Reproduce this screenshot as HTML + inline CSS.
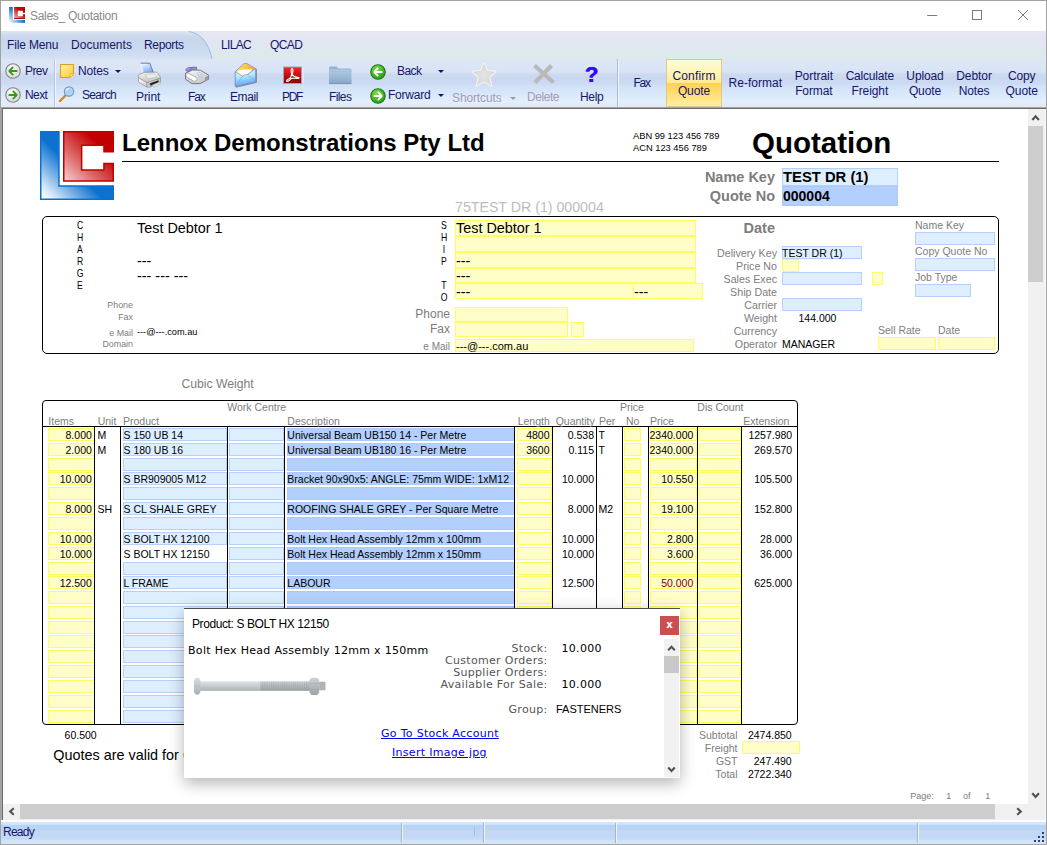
<!DOCTYPE html><html><head><meta charset="utf-8"><title>Sales_ Quotation</title><style>
*{box-sizing:border-box;margin:0;padding:0}
html,body{width:1047px;height:845px;overflow:hidden;background:#fff}
body{font-family:"Liberation Sans",sans-serif;font-size:11px;color:#000;position:relative}
.a{position:absolute;white-space:nowrap}
.ui{font-family:"Liberation Sans",sans-serif;font-size:12px;color:#15156a}
.y{position:absolute;background:#fffdc8;border:1px solid #fffd5f}
.lb{position:absolute;background:#ddefff;border:1px solid #b5d0fc}
.mb{position:absolute;background:#b2cffe;border:1px solid #acc9fb}
.vl{position:absolute;background:#000;width:1px}
.hl{position:absolute;background:#000;height:1px}
.g{color:#7d7d7d}
.t11{font-size:10.5px;line-height:13px}
.r{text-align:right}
.vd{font-family:"DejaVu Sans","Liberation Sans",sans-serif}
</style></head><body>
<div class="a" style="left:0;top:0;width:1047px;height:845px;background:#fff;border:1px solid #a2a2a2"></div>
<svg class="a" style="left:9px;top:7px" width="16" height="16" viewBox="0 0 16 16">
<defs><linearGradient id="mb" gradientUnits="userSpaceOnUse" x1="0" y1="16" x2="9" y2="7"><stop offset="0.05" stop-color="#ffffff"/><stop offset="1" stop-color="#0a6ccc"/></linearGradient>
<linearGradient id="mr" gradientUnits="userSpaceOnUse" x1="5" y1="12" x2="13" y2="4"><stop offset="0" stop-color="#f3c4c4"/><stop offset="0.9" stop-color="#c00000"/></linearGradient></defs>
<path d="M0 0H3.7V13H16V16H0Z" fill="url(#mb)"/>
<path d="M5 0H16V5.7H13.9V3.8H8.8V9.2H13.9V7.2H16V12H5Z" fill="url(#mr)"/>
<path d="M5 11H16V12H5Z" fill="#c00000"/></svg>
<div class="a " style="left:30px;top:8px;font-size:12px;color:#8a8a8a;line-height:16px;letter-spacing:-0.3px">Sales_ Quotation</div>
<svg class="a" style="left:915px;top:0" width="132" height="31" viewBox="0 0 132 31">
<path d="M12.2 15.5H22.2" stroke="#7a7a7a" stroke-width="1" fill="none"/>
<rect x="57.5" y="10.5" width="9" height="9" stroke="#7a7a7a" stroke-width="1" fill="none"/>
<path d="M103 10L113 20M113 10L103 20" stroke="#7a7a7a" stroke-width="1" fill="none"/></svg>
<div class="a" style="left:1px;top:31px;width:1045px;height:28px;background:linear-gradient(#e6e7f3 0%,#e2e6f2 45%,#dde8ee 75%,#dcebe8 100%)"></div>
<svg class="a" style="left:1px;top:31px" width="215" height="28" viewBox="0 0 215 28">
<defs><linearGradient id="tg" x1="0" y1="0" x2="0" y2="1"><stop offset="0" stop-color="#dee7f1"/><stop offset="0.1" stop-color="#d2deee"/><stop offset="0.28" stop-color="#c7d6eb"/><stop offset="0.65" stop-color="#cad9ee"/><stop offset="1" stop-color="#d5e1f4"/></linearGradient></defs>
<path d="M0 0H188C202 3 208 14 211 28H0Z" fill="url(#tg)"/>
<path d="M188 0.5C202 3 208 14 211 28" stroke="#9db9e6" stroke-width="1" fill="none"/></svg>
<div class="a ui" style="left:7px;top:37px;line-height:16px;letter-spacing:-0.15px;">File Menu</div>
<div class="a ui" style="left:71px;top:37px;line-height:16px;letter-spacing:0.03px;">Documents</div>
<div class="a ui" style="left:144px;top:37px;line-height:16px;letter-spacing:-0.33px;">Reports</div>
<div class="a ui" style="left:221px;top:37px;line-height:16px;letter-spacing:-0.67px;">LILAC</div>
<div class="a ui" style="left:270px;top:37px;line-height:16px;letter-spacing:-0.59px;">QCAD</div>
<div class="a" style="left:1px;top:59px;width:1045px;height:48px;background:linear-gradient(#dde5f5 0%,#dae5f6 15%,#d8e3f5 27%,#cfd9f0 31%,#c8d9ef 40%,#ccd9f2 50%,#d2e1f6 57%,#d8e8fa 72%,#e4effc 90%,#e0e8f5 100%)"></div>
<div class="a" style="left:1px;top:107px;width:1045px;height:1px;background:#a6a6a6"></div>
<div class="a" style="left:1px;top:108px;width:1045px;height:1px;background:#6b6b6b"></div>
<div class="a" style="left:1px;top:108px;width:2px;height:713px;background:#a6a6a6"></div>
<div class="a" style="left:2px;top:108px;width:1px;height:713px;background:#6b6b6b"></div>
<div class="a" style="left:54px;top:59px;width:1px;height:48px;background:#b6c4de"></div>
<div class="a" style="left:55px;top:59px;width:1px;height:48px;background:#f2f6fc"></div>
<div class="a" style="left:617px;top:59px;width:1px;height:48px;background:#a9b9d6"></div>
<div class="a" style="left:618px;top:59px;width:1px;height:48px;background:#f2f6fc"></div>
<svg class="a" style="left:5px;top:63px" width="16" height="16" viewBox="0 0 15 15"><defs><radialGradient id="sg" cx="0.4" cy="0.3" r="0.8"><stop offset="0" stop-color="#fbfbfb"/><stop offset="1" stop-color="#cfd3d8"/></radialGradient><radialGradient id="gg" cx="0.4" cy="0.3" r="0.8"><stop offset="0" stop-color="#7fdc4a"/><stop offset="1" stop-color="#1f9410"/></radialGradient></defs><circle cx="7.5" cy="7.5" r="6.8" fill="url(#sg)" stroke="#838383" stroke-width="1"/><path d="M11 7.5H4.2M7.2 4.2L4 7.5L7.2 10.8" stroke="#3b9a14" stroke-width="1.7" fill="none" stroke-linecap="round" stroke-linejoin="round"/></svg>
<svg class="a" style="left:5px;top:87px" width="16" height="16" viewBox="0 0 15 15"><defs><radialGradient id="sg" cx="0.4" cy="0.3" r="0.8"><stop offset="0" stop-color="#fbfbfb"/><stop offset="1" stop-color="#cfd3d8"/></radialGradient><radialGradient id="gg" cx="0.4" cy="0.3" r="0.8"><stop offset="0" stop-color="#7fdc4a"/><stop offset="1" stop-color="#1f9410"/></radialGradient></defs><circle cx="7.5" cy="7.5" r="6.8" fill="url(#sg)" stroke="#838383" stroke-width="1"/><path d="M4 7.5H10.8M7.8 4.2L11 7.5L7.8 10.8" stroke="#3b9a14" stroke-width="1.7" fill="none" stroke-linecap="round" stroke-linejoin="round"/></svg>
<div class="a ui" style="left:25px;top:63px;line-height:16px;letter-spacing:-0.59px;">Prev</div>
<div class="a ui" style="left:25px;top:87px;line-height:16px;letter-spacing:-0.59px;">Next</div>
<svg class="a" style="left:59px;top:63px" width="16" height="16" viewBox="0 0 16 16"><defs><linearGradient id="ng" x1="0" y1="0" x2="1" y2="1"><stop offset="0" stop-color="#fff3a4"/><stop offset="1" stop-color="#fbc93c"/></linearGradient></defs><path d="M1.5 1.5H14.5V11L11 14.5H1.5Z" fill="url(#ng)" stroke="#dea21c" stroke-width="1.1"/><path d="M14.5 11H11V14.5" fill="#fff3b0" stroke="#d9a318" stroke-width="0.8"/></svg>
<div class="a ui" style="left:78px;top:63px;line-height:16px;letter-spacing:-0.13px;">Notes</div>
<div class="a" style="left:115px;top:70px;border-left:3px solid transparent;border-right:3px solid transparent;border-top:3px solid #15156a"></div>
<svg class="a" style="left:58px;top:85px" width="18" height="18" viewBox="0 0 18 18"><path d="M2 16L8 10" stroke="#d8862a" stroke-width="2.4" stroke-linecap="round"/><circle cx="11" cy="6.5" r="4.6" fill="#bfe0fb" stroke="#7f96b8" stroke-width="1.3"/><circle cx="11" cy="6.5" r="3.2" fill="#a6d3f8"/><path d="M8.5 5.5A3 3 0 0 1 11 3.5" stroke="#fff" stroke-width="1" fill="none"/></svg>
<div class="a ui" style="left:82px;top:87px;line-height:16px;letter-spacing:-0.67px;">Search</div>
<svg class="a" style="left:136px;top:61px" width="27" height="28" viewBox="136 61 27 28">
<defs><linearGradient id="pg1" x1="0" y1="0" x2="0" y2="1"><stop offset="0" stop-color="#f6f6f6"/><stop offset="1" stop-color="#c2c2c2"/></linearGradient>
<linearGradient id="pg2" x1="0" y1="0" x2="0.5" y2="1"><stop offset="0" stop-color="#ffffff"/><stop offset="1" stop-color="#74b2f4"/></linearGradient>
<linearGradient id="pg3" x1="0" y1="0" x2="1" y2="0"><stop offset="0" stop-color="#fafafa"/><stop offset="1" stop-color="#d4d4d4"/></linearGradient></defs>
<path d="M140.2 63.2H149.8L153.4 72.8H143.4Z" fill="url(#pg2)"/>
<path d="M140.2 63.2H149.8L153.4 72.8" fill="none" stroke="#6868a6" stroke-width="0.9"/>
<path d="M140.2 63.2L143.4 72.8" fill="none" stroke="#f4f6ff" stroke-width="0.8"/>
<path d="M138.2 76.4Q138 75 139.6 74.4L144.5 72.4L155.8 72.2Q157.2 72.2 157.8 73.2L160.2 77Q160.6 78 159.4 78.6L148 82.6Q147 82.9 146 82.4L138.8 78Z" fill="url(#pg1)" stroke="#8c8c8c" stroke-width="0.7"/>
<path d="M145 74.2L154.6 73.8L157 77.2L147.4 78.8Z" fill="#ececec" stroke="#a8a8a8" stroke-width="0.5"/>
<path d="M138.4 77.6L147 82.6V87L139 82.4Q138.4 82 138.4 81Z" fill="url(#pg3)" stroke="#909090" stroke-width="0.7"/>
<path d="M147 82.6L160.4 78V82L150 87.2L147 87Z" fill="#cfcfcf" stroke="#8a8a8a" stroke-width="0.7"/>
<path d="M149.6 83.4L158.4 80.2L158.8 82L150.8 85.6Z" fill="#1e1e1e"/>
<path d="M152 85.4L159.4 82.2L161.2 83.4L154 87Z" fill="#e4e4e4" stroke="#9a9a9a" stroke-width="0.4"/>
<path d="M149.6 84.6L151.6 86" stroke="#4a58c8" stroke-width="0.8"/>
<rect x="156.6" y="78.8" width="2.2" height="1" fill="#5cc040" transform="rotate(-18 157.7 79.3)"/>
</svg>
<div class="a ui" style="left:136px;top:89px;line-height:16px;letter-spacing:-0.07px;">Print</div>
<svg class="a" style="left:184px;top:65px" width="26" height="21" viewBox="184 65 26 21">
<defs><linearGradient id="fg1" x1="0" y1="0" x2="0.6" y2="1"><stop offset="0" stop-color="#f8f8f8"/><stop offset="1" stop-color="#c9c9c9"/></linearGradient>
<linearGradient id="fg2" x1="0" y1="0" x2="1" y2="0.4"><stop offset="0" stop-color="#d6d6ff"/><stop offset="0.5" stop-color="#7c7cf0"/><stop offset="1" stop-color="#a9a9dc"/></linearGradient></defs>
<path d="M185.6 70.2Q186 68.4 188.6 67.6L196.4 67.1L196.9 69L191.5 71.6Q187.5 72.6 185.6 70.2Z" fill="url(#fg2)" stroke="#5c5c74" stroke-width="0.7"/>
<path d="M185.5 73.2L192.5 70L200.5 70.2L208.6 75.2V79.2L200 83.6H192L185.5 79.2Z" fill="url(#fg1)" stroke="#6c6c6c" stroke-width="0.9" stroke-linejoin="round"/>
<path d="M208.6 75.2V79.2L205 81.2V77.6Z" fill="#9a9a9a"/>
<path d="M186 74.4Q185.8 72.8 187.6 72.9L196.3 77.5Q197.6 78.5 196.9 80L195.9 81Q194.7 81.7 193.5 80.9L186.2 76.7Z" fill="#fcfcfc" stroke="#8a8a8a" stroke-width="0.6"/>
<path d="M186.2 77L193.3 81.3" stroke="#b4a8b8" stroke-width="0.6"/>
<g fill="#9cc6ec"><circle cx="197.6" cy="73" r="0.7"/><circle cx="199.8" cy="72.4" r="0.7"/><circle cx="201.8" cy="73.6" r="0.7"/><circle cx="198.6" cy="75" r="0.7"/><circle cx="200.8" cy="74.8" r="0.7"/><circle cx="203" cy="75.6" r="0.7"/><circle cx="199.6" cy="77" r="0.7"/><circle cx="201.8" cy="77.2" r="0.7"/></g>
</svg>
<div class="a ui" style="left:188px;top:89px;line-height:16px;letter-spacing:-1.17px;">Fax</div>
<svg class="a" style="left:233px;top:61px" width="25" height="27" viewBox="233 61 25 27">
<defs><linearGradient id="eg1" x1="0" y1="0" x2="0.2" y2="1"><stop offset="0" stop-color="#e2ffff"/><stop offset="0.45" stop-color="#b4ecfc"/><stop offset="1" stop-color="#5aa8f6"/></linearGradient>
<linearGradient id="eg2" x1="0" y1="0" x2="1" y2="0.5"><stop offset="0" stop-color="#fff56a"/><stop offset="0.5" stop-color="#ffc24a"/><stop offset="1" stop-color="#ff9a34"/></linearGradient></defs>
<path d="M256.4 69.2V82.4L236 87.2" fill="none" stroke="#5a5a5a" stroke-width="0.9" opacity="0.7"/>
<path d="M235.3 71.6L243.8 63.8Q245.2 62.8 246.8 63.6L255.6 68.6V81.9L235.3 86.5Z" fill="url(#eg2)" stroke="#7078c6" stroke-width="0.65" stroke-linejoin="round"/>
<path d="M238.4 70.6Q245 69 252.4 69.4Q251 72.6 247.2 74.4Q244.2 74.4 242.4 76.2Q239.6 74.4 237.4 72.4Z" fill="#fffdf2"/>
<path d="M235.3 71.6L242.6 76.2Q244.6 74.4 247.4 74.6L255.6 68.6V81.9L235.3 86.5Z" fill="url(#eg1)" stroke="#7078c6" stroke-width="0.6" stroke-linejoin="round"/>
<path d="M235.6 86.2L242.6 76.2M255.4 81.4L247.8 74.6" stroke="#8a94d4" stroke-width="0.6" fill="none"/>
</svg>
<div class="a ui" style="left:230px;top:89px;line-height:16px;letter-spacing:-0.38px;">Email</div>
<svg class="a" style="left:283px;top:66px" width="21" height="19" viewBox="0 0 21 19">
<defs><linearGradient id="pdg" x1="0" y1="0" x2="0" y2="1"><stop offset="0" stop-color="#ee2a2a"/><stop offset="0.55" stop-color="#c40a0a"/><stop offset="1" stop-color="#860000"/></linearGradient></defs>
<rect x="0.5" y="1" width="18" height="16.5" fill="url(#pdg)" stroke="#93a6cc" stroke-width="1"/>
<rect x="19.6" y="3" width="0.9" height="14" fill="#f1f4fa"/>
<path d="M9 2.5C10.5 2.5 10 6 9.2 8.5C10.3 10.5 12.5 11.3 15.2 11.2C16.5 11.4 16.2 12.6 15 12.4C12.8 12.2 10.2 12 8.2 12.4C6.8 14.2 5 16 3.8 15.4C3 14.6 5 13 7.2 12C8 10.8 8.4 9.6 8.6 8.2C8 6 7.8 2.6 9 2.5Z" fill="none" stroke="#fff" stroke-width="1.1" stroke-linejoin="round"/>
</svg>
<div class="a ui" style="left:282px;top:89px;line-height:16px;letter-spacing:-1.33px;">PDF</div>
<svg class="a" style="left:328px;top:65px" width="25" height="20" viewBox="0 0 25 20">
<defs><linearGradient id="flg" x1="0" y1="0" x2="0" y2="1"><stop offset="0" stop-color="#8eaecf"/><stop offset="0.35" stop-color="#a9c5de"/><stop offset="1" stop-color="#84a6c8"/></linearGradient></defs>
<path d="M1 3Q1 1.5 2.5 1.5H8.5L10.5 3.5H22Q23.5 3.5 23.5 5V17.5Q23.5 19 22 19H2.5Q1 19 1 17.5Z" fill="url(#flg)"/>
<path d="M1 5.2H23.5" stroke="#b9d0e6" stroke-width="0.8"/>
<path d="M1 18.6H23.5" stroke="#6f92b6" stroke-width="0.8"/>
</svg>
<div class="a ui" style="left:329px;top:89px;line-height:16px;letter-spacing:-0.61px;">Files</div>
<svg class="a" style="left:369.5px;top:63.5px" width="16" height="16" viewBox="0 0 15 15"><defs><radialGradient id="sg" cx="0.4" cy="0.3" r="0.8"><stop offset="0" stop-color="#fbfbfb"/><stop offset="1" stop-color="#cfd3d8"/></radialGradient><radialGradient id="gg" cx="0.4" cy="0.3" r="0.8"><stop offset="0" stop-color="#7fdc4a"/><stop offset="1" stop-color="#1f9410"/></radialGradient></defs><circle cx="7.5" cy="7.5" r="6.8" fill="url(#gg)" stroke="#1c7a12" stroke-width="1"/><path d="M11 7.5H4.2M7.2 4.2L4 7.5L7.2 10.8" stroke="#fff" stroke-width="1.7" fill="none" stroke-linecap="round" stroke-linejoin="round"/></svg>
<svg class="a" style="left:369.5px;top:87.5px" width="16" height="16" viewBox="0 0 15 15"><defs><radialGradient id="sg" cx="0.4" cy="0.3" r="0.8"><stop offset="0" stop-color="#fbfbfb"/><stop offset="1" stop-color="#cfd3d8"/></radialGradient><radialGradient id="gg" cx="0.4" cy="0.3" r="0.8"><stop offset="0" stop-color="#7fdc4a"/><stop offset="1" stop-color="#1f9410"/></radialGradient></defs><circle cx="7.5" cy="7.5" r="6.8" fill="url(#gg)" stroke="#1c7a12" stroke-width="1"/><path d="M4 7.5H10.8M7.8 4.2L11 7.5L7.8 10.8" stroke="#fff" stroke-width="1.7" fill="none" stroke-linecap="round" stroke-linejoin="round"/></svg>
<div class="a ui" style="left:397px;top:63px;line-height:16px;letter-spacing:-0.59px;">Back</div>
<div class="a ui" style="left:388px;top:87px;line-height:16px;letter-spacing:-0.24px;">Forward</div>
<div class="a" style="left:438px;top:70px;border-left:3px solid transparent;border-right:3px solid transparent;border-top:3px solid #15156a"></div>
<div class="a" style="left:438px;top:94px;border-left:3px solid transparent;border-right:3px solid transparent;border-top:3px solid #15156a"></div>
<svg class="a" style="left:470px;top:61px" width="28" height="28" viewBox="470 61 28 28">
<defs><radialGradient id="stg" cx="0.5" cy="0.5" r="0.6"><stop offset="0" stop-color="#e6e6e6"/><stop offset="1" stop-color="#d2d2d2"/></radialGradient></defs>
<path d="M484 63.6L487.3 71.2L495.3 71.6L489.2 77.1L491.2 85.6L484 81.1L476.8 85.6L478.8 77.1L472.7 71.6L480.7 71.2Z" fill="url(#stg)" stroke="#f3f3f3" stroke-width="2.2" stroke-linejoin="round"/>
<path d="M484 64.4L487 71.6L494.4 72L488.7 77L490.6 84.8L484 80.6L477.4 84.8L479.3 77L473.6 72L481 71.6Z" fill="url(#stg)" stroke="#d9d9d9" stroke-width="0.8" stroke-linejoin="round"/>
</svg>
<div class="a ui" style="left:452px;top:90px;line-height:16px;letter-spacing:-0.12px;color:#a79ab4">Shortcuts</div>
<div class="a" style="left:510px;top:97px;border-left:3px solid transparent;border-right:3px solid transparent;border-top:3px solid #9a9aa8"></div>
<svg class="a" style="left:532px;top:63px" width="24" height="22" viewBox="0 0 24 22"><path d="M2.5 2.5L21.5 19.5M19.5 2.5L3 19.5" stroke="#b9b9b9" stroke-width="4.2" stroke-linecap="butt"/></svg>
<div class="a ui" style="left:527px;top:89px;line-height:16px;letter-spacing:-0.43px;color:#a79ab4">Delete</div>
<div class="a " style="left:585px;top:62px;font-size:22px;font-weight:bold;color:#2212f0;line-height:26px;text-shadow:0.6px 0 0 #e020e0,-0.4px 0 0 #2a2aff">?</div>
<div class="a ui" style="left:580px;top:89px;line-height:16px;letter-spacing:-0.32px;">Help</div>
<div class="a" style="left:666px;top:59px;width:56px;height:48px;border:1px solid #dcc88c;background:linear-gradient(#fffbd8 0%,#fff3b4 30%,#ffea96 49%,#ffd24f 50%,#ffdc6e 70%,#ffefa2 100%)"></div>
<div class="a ui" style="left:581.7px;top:75px;width:120px;text-align:center;line-height:16px;letter-spacing:-1.17px;">Fax</div>
<div class="a ui" style="left:634px;top:69.3px;width:120px;text-align:center;line-height:14.7px"><span style="letter-spacing:0.16px;">Confirm</span><br><span style="letter-spacing:-0.10px;">Quote</span></div>
<div class="a ui" style="left:695.3px;top:75px;width:120px;text-align:center;line-height:16px;letter-spacing:0.01px;">Re-format</div>
<div class="a ui" style="left:753.8px;top:69.3px;width:120px;text-align:center;line-height:14.7px"><span style="letter-spacing:-0.05px;">Portrait</span><br><span style="letter-spacing:-0.12px;">Format</span></div>
<div class="a ui" style="left:809.8px;top:69.3px;width:120px;text-align:center;line-height:14.7px"><span style="letter-spacing:-0.19px;">Calculate</span><br><span style="letter-spacing:-0.09px;">Freight</span></div>
<div class="a ui" style="left:865px;top:69.3px;width:120px;text-align:center;line-height:14.7px"><span style="letter-spacing:-0.12px;">Upload</span><br><span style="letter-spacing:-0.10px;">Quote</span></div>
<div class="a ui" style="left:914px;top:69.3px;width:120px;text-align:center;line-height:14.7px"><span style="letter-spacing:-0.05px;">Debtor</span><br><span style="letter-spacing:-0.13px;">Notes</span></div>
<div class="a ui" style="left:961.7px;top:69.3px;width:120px;text-align:center;line-height:14.7px"><span style="letter-spacing:-0.18px;">Copy</span><br><span style="letter-spacing:-0.10px;">Quote</span></div>
<svg class="a" style="left:39px;top:130px" width="77" height="72" viewBox="39 130 77 72">
<defs><linearGradient id="lb" gradientUnits="userSpaceOnUse" x1="42" y1="198" x2="72" y2="168"><stop offset="0" stop-color="#ffffff"/><stop offset="0.2" stop-color="#dcebf9"/><stop offset="1" stop-color="#0c72d2"/></linearGradient>
<linearGradient id="lr" gradientUnits="userSpaceOnUse" x1="64" y1="181" x2="100" y2="145"><stop offset="0" stop-color="#f7d0d0"/><stop offset="0.5" stop-color="#dc6262"/><stop offset="1" stop-color="#c20000"/></linearGradient></defs>
<path d="M40.75 131.75H58.95V186.05H113.25V199.25H40.75Z" fill="url(#lb)" stroke="#0a70d0" stroke-width="1.5"/>
<path d="M63.75 131.75H113.25V151.75H103.95V145.15H81.65V170.05H103.95V163.45H113.25V181.05H63.75Z" fill="url(#lr)" stroke="#c00000" stroke-width="1.5"/>
</svg>
<div class="a " style="left:122px;top:129px;font-size:24px;font-weight:bold;line-height:28px">Lennox Demonstrations Pty Ltd</div>
<div class="hl" style="left:122px;top:161px;width:877px;height:1px;"></div>
<div class="a " style="left:633px;top:131px;font-size:9.3px;line-height:11px">ABN 99 123 456 789</div>
<div class="a " style="left:633px;top:143px;font-size:9.3px;line-height:11px">ACN 123 456 789</div>
<div class="a " style="left:752px;top:125px;font-size:29.5px;font-weight:bold;line-height:36px">Quotation</div>
<div class="a r g" style="right:272px;top:168px;font-size:14.5px;font-weight:bold;line-height:18px">Name Key</div>
<div class="a r g" style="right:272px;top:187px;font-size:14.5px;font-weight:bold;line-height:18px">Quote No</div>
<div class="lb" style="left:782px;top:168px;width:116px;height:18px;"></div>
<div class="mb" style="left:782px;top:186px;width:116px;height:20px;"></div>
<div class="a " style="left:783px;top:168px;font-size:14.8px;font-weight:bold;line-height:18px">TEST DR (1)</div>
<div class="a " style="left:783px;top:187px;font-size:14px;font-weight:bold;line-height:18px">000004</div>
<div class="a " style="left:455px;top:199px;font-size:14.2px;color:#bdbdbd;line-height:17px">75TEST DR (1) 000004</div>
<div class="a" style="left:42px;top:216px;width:957px;height:138px;border:1px solid #000;border-radius:5px"></div>
<div class="a" style="left:70px;top:220px;width:20px;text-align:center;font-size:9.6px;line-height:12px;transform:scale(0.9,1.04);transform-origin:50% 75%">C</div>
<div class="a" style="left:70px;top:232px;width:20px;text-align:center;font-size:9.6px;line-height:12px;transform:scale(0.9,1.04);transform-origin:50% 75%">H</div>
<div class="a" style="left:70px;top:244px;width:20px;text-align:center;font-size:9.6px;line-height:12px;transform:scale(0.9,1.04);transform-origin:50% 75%">A</div>
<div class="a" style="left:70px;top:256px;width:20px;text-align:center;font-size:9.6px;line-height:12px;transform:scale(0.9,1.04);transform-origin:50% 75%">R</div>
<div class="a" style="left:70px;top:268px;width:20px;text-align:center;font-size:9.6px;line-height:12px;transform:scale(0.9,1.04);transform-origin:50% 75%">G</div>
<div class="a" style="left:70px;top:280px;width:20px;text-align:center;font-size:9.6px;line-height:12px;transform:scale(0.9,1.04);transform-origin:50% 75%">E</div>
<div class="a " style="left:137px;top:219px;font-size:14.4px;line-height:18px">Test Debtor 1</div>
<div class="a " style="left:137px;top:252px;font-size:14.4px;line-height:18px">---</div>
<div class="a " style="left:137px;top:267.3px;font-size:14.4px;line-height:18px">--- --- ---</div>
<div class="a r g" style="right:914px;top:298.8px;font-size:8.9px;line-height:12px">Phone</div>
<div class="a r g" style="right:914px;top:310.5px;font-size:8.9px;line-height:12px">Fax</div>
<div class="a r g" style="right:914px;top:326.5px;font-size:8.9px;line-height:12px">e Mail</div>
<div class="a r g" style="right:914px;top:338px;font-size:8.9px;line-height:12px">Domain</div>
<div class="a " style="left:137px;top:326px;font-size:9.2px;line-height:12px">---@---.com.au</div>
<div class="a" style="left:434px;top:220px;width:20px;text-align:center;font-size:9.6px;line-height:12px;transform:scale(0.9,1.04);transform-origin:50% 75%">S</div>
<div class="a" style="left:434px;top:232px;width:20px;text-align:center;font-size:9.6px;line-height:12px;transform:scale(0.9,1.04);transform-origin:50% 75%">H</div>
<div class="a" style="left:434px;top:244px;width:20px;text-align:center;font-size:9.6px;line-height:12px;transform:scale(0.9,1.04);transform-origin:50% 75%">I</div>
<div class="a" style="left:434px;top:255.6px;width:20px;text-align:center;font-size:9.6px;line-height:12px;transform:scale(0.9,1.04);transform-origin:50% 75%">P</div>
<div class="a" style="left:434px;top:280px;width:20px;text-align:center;font-size:9.6px;line-height:12px;transform:scale(0.9,1.04);transform-origin:50% 75%">T</div>
<div class="a" style="left:434px;top:291.8px;width:20px;text-align:center;font-size:9.6px;line-height:12px;transform:scale(0.9,1.04);transform-origin:50% 75%">O</div>
<div class="y" style="left:455px;top:220px;width:241px;height:16px;"></div>
<div class="y" style="left:455px;top:236px;width:241px;height:16px;"></div>
<div class="y" style="left:455px;top:252px;width:241px;height:16px;"></div>
<div class="y" style="left:455px;top:267.5px;width:241px;height:15.5px;"></div>
<div class="y" style="left:455px;top:283px;width:178.5px;height:16px;"></div>
<div class="y" style="left:633px;top:283px;width:70px;height:16px;"></div>
<div class="y" style="left:455px;top:307px;width:113px;height:15px;"></div>
<div class="y" style="left:455px;top:322px;width:113px;height:15px;"></div>
<div class="y" style="left:571px;top:322px;width:13px;height:15px;"></div>
<div class="y" style="left:455px;top:339px;width:239px;height:13px;"></div>
<div class="a " style="left:456px;top:219px;font-size:14.4px;line-height:18px">Test Debtor 1</div>
<div class="a " style="left:456px;top:252px;font-size:14.4px;line-height:18px">---</div>
<div class="a " style="left:456px;top:267.3px;font-size:14.4px;line-height:18px">---</div>
<div class="a " style="left:456px;top:282.5px;font-size:14.4px;line-height:18px">---</div>
<div class="a " style="left:634px;top:282.5px;font-size:14.4px;line-height:18px">---</div>
<div class="a r g" style="right:597px;top:307px;font-size:12px;line-height:15px">Phone</div>
<div class="a r g" style="right:597px;top:322px;font-size:12px;line-height:15px">Fax</div>
<div class="a r g" style="right:597px;top:340.5px;font-size:10px;line-height:12px">e Mail</div>
<div class="a " style="left:456px;top:340px;font-size:11px;line-height:12px">---@---.com.au</div>
<div class="a r g" style="right:272px;top:219px;font-size:14.5px;font-weight:bold;line-height:18px">Date</div>
<div class="a r g" style="right:270px;top:246.8px;font-size:10.7px;line-height:13px">Delivery Key</div>
<div class="a r g" style="right:270px;top:259.8px;font-size:10.7px;line-height:13px">Price No</div>
<div class="a r g" style="right:270px;top:272.8px;font-size:10.7px;line-height:13px">Sales Exec</div>
<div class="a r g" style="right:270px;top:285.8px;font-size:10.7px;line-height:13px">Ship Date</div>
<div class="a r g" style="right:270px;top:298.8px;font-size:10.7px;line-height:13px">Carrier</div>
<div class="a r g" style="right:270px;top:311.8px;font-size:10.7px;line-height:13px">Weight</div>
<div class="a r g" style="right:270px;top:324.8px;font-size:10.7px;line-height:13px">Currency</div>
<div class="a r g" style="right:270px;top:337.8px;font-size:10.7px;line-height:13px">Operator</div>
<div class="lb" style="left:782px;top:246px;width:80px;height:12.5px;"></div>
<div class="y" style="left:782px;top:259px;width:16.5px;height:12.5px;"></div>
<div class="lb" style="left:782px;top:272px;width:80px;height:12.5px;"></div>
<div class="y" style="left:872px;top:272px;width:11px;height:12.5px;"></div>
<div class="lb" style="left:782px;top:298px;width:80px;height:12.5px;"></div>
<div class="a t11" style="left:782px;top:246.5px;">TEST DR (1)</div>
<div class="a t11" style="left:798.5px;top:311.8px;">144.000</div>
<div class="a t11" style="left:782px;top:337.5px;">MANAGER</div>
<div class="a g t11" style="left:915px;top:219px;">Name Key</div>
<div class="lb" style="left:915px;top:232px;width:80px;height:12.5px;"></div>
<div class="a g t11" style="left:915px;top:244.5px;">Copy Quote No</div>
<div class="lb" style="left:915px;top:258px;width:80px;height:12.5px;"></div>
<div class="a g t11" style="left:915px;top:270.5px;">Job Type</div>
<div class="lb" style="left:915px;top:284px;width:56px;height:12.5px;"></div>
<div class="a g t11" style="left:878px;top:323.8px;">Sell Rate</div>
<div class="a g t11" style="left:938px;top:323.8px;">Date</div>
<div class="y" style="left:878px;top:337px;width:58px;height:12.5px;"></div>
<div class="y" style="left:938px;top:337px;width:56.5px;height:12.5px;"></div>
<div class="a g" style="left:181.5px;top:377px;font-size:12.2px;line-height:14px">Cubic Weight</div>
<div class="a" style="left:42px;top:400px;width:756px;height:325px;border:1px solid #000;border-radius:4px"></div>
<div class="hl" style="left:42px;top:426px;width:755px;height:1px;"></div>
<div class="a g t11" style="left:227.3px;top:401px;">Work Centre</div>
<div class="a g t11" style="left:620px;top:401px;">Price</div>
<div class="a g t11" style="left:697.3px;top:401px;">Dis Count</div>
<div class="a g t11" style="left:48.3px;top:414.6px;">Items</div>
<div class="a g t11" style="left:97.7px;top:414.6px;">Unit</div>
<div class="a g t11" style="left:123px;top:414.6px;">Product</div>
<div class="a g t11" style="left:287.3px;top:414.6px;">Description</div>
<div class="a g t11" style="left:517.7px;top:414.6px;">Length</div>
<div class="a g t11" style="left:555.7px;top:414.6px;">Quantity</div>
<div class="a g t11" style="left:599px;top:414.6px;">Per</div>
<div class="a g t11" style="left:626px;top:414.6px;">No</div>
<div class="a g t11" style="left:650px;top:414.6px;">Price</div>
<div class="a g t11" style="left:743.3px;top:414.6px;">Extension</div>
<div class="y" style="left:48px;top:428px;width:47px;height:13px;"></div>
<div class="lb" style="left:123px;top:428px;width:103.5px;height:13px;"></div>
<div class="lb" style="left:229px;top:428px;width:54.75px;height:13px;"></div>
<div class="mb" style="left:287px;top:428px;width:226.75px;height:13px;"></div>
<div class="y" style="left:517px;top:428px;width:35px;height:13px;"></div>
<div class="y" style="left:624px;top:428px;width:17px;height:13px;"></div>
<div class="y" style="left:650px;top:428px;width:47px;height:13px;"></div>
<div class="y" style="left:699px;top:428px;width:42px;height:13px;"></div>
<div class="a r t11" style="right:955.2px;top:429px;">8.000</div>
<div class="a t11" style="left:97.5px;top:429px;">M</div>
<div class="a t11" style="left:123.5px;top:429px;">S 150 UB 14</div>
<div class="a t11" style="left:287.3px;top:429px;">Universal Beam UB150 14 - Per Metre</div>
<div class="a r t11" style="right:497.5px;top:429px;">4800</div>
<div class="a r t11" style="right:453px;top:429px;">0.538</div>
<div class="a t11" style="left:598.5px;top:429px;">T</div>
<div class="a r t11" style="right:353.7px;top:429px;">2340.000</div>
<div class="a r t11" style="right:254.8px;top:429px;">1257.980</div>
<div class="y" style="left:48px;top:443px;width:47px;height:13px;"></div>
<div class="lb" style="left:123px;top:443px;width:103.5px;height:13px;"></div>
<div class="lb" style="left:229px;top:443px;width:54.75px;height:13px;"></div>
<div class="mb" style="left:287px;top:443px;width:226.75px;height:13px;"></div>
<div class="y" style="left:517px;top:443px;width:35px;height:13px;"></div>
<div class="y" style="left:624px;top:443px;width:17px;height:13px;"></div>
<div class="y" style="left:650px;top:443px;width:47px;height:13px;"></div>
<div class="y" style="left:699px;top:443px;width:42px;height:13px;"></div>
<div class="a r t11" style="right:955.2px;top:444px;">2.000</div>
<div class="a t11" style="left:97.5px;top:444px;">M</div>
<div class="a t11" style="left:123.5px;top:444px;">S 180 UB 16</div>
<div class="a t11" style="left:287.3px;top:444px;">Universal Beam UB180 16 - Per Metre</div>
<div class="a r t11" style="right:497.5px;top:444px;">3600</div>
<div class="a r t11" style="right:453px;top:444px;">0.115</div>
<div class="a t11" style="left:598.5px;top:444px;">T</div>
<div class="a r t11" style="right:353.7px;top:444px;">2340.000</div>
<div class="a r t11" style="right:254.8px;top:444px;">269.570</div>
<div class="y" style="left:48px;top:458px;width:47px;height:13px;"></div>
<div class="lb" style="left:123px;top:458px;width:103.5px;height:13px;"></div>
<div class="lb" style="left:229px;top:458px;width:54.75px;height:13px;"></div>
<div class="mb" style="left:287px;top:458px;width:226.75px;height:13px;"></div>
<div class="y" style="left:517px;top:458px;width:35px;height:13px;"></div>
<div class="y" style="left:624px;top:458px;width:17px;height:13px;"></div>
<div class="y" style="left:650px;top:458px;width:47px;height:13px;"></div>
<div class="y" style="left:699px;top:458px;width:42px;height:13px;"></div>
<div class="y" style="left:48px;top:472px;width:47px;height:13px;"></div>
<div class="lb" style="left:123px;top:472px;width:103.5px;height:13px;"></div>
<div class="lb" style="left:229px;top:472px;width:54.75px;height:13px;"></div>
<div class="mb" style="left:287px;top:472px;width:226.75px;height:13px;"></div>
<div class="y" style="left:517px;top:472px;width:35px;height:13px;"></div>
<div class="y" style="left:624px;top:472px;width:17px;height:13px;"></div>
<div class="y" style="left:650px;top:472px;width:47px;height:13px;"></div>
<div class="y" style="left:699px;top:472px;width:42px;height:13px;"></div>
<div class="a r t11" style="right:955.2px;top:473px;">10.000</div>
<div class="a t11" style="left:123.5px;top:473px;">S BR909005 M12</div>
<div class="a t11" style="left:287.3px;top:473px;">Bracket 90x90x5: ANGLE: 75mm WIDE: 1xM12</div>
<div class="a r t11" style="right:453px;top:473px;">10.000</div>
<div class="a r t11" style="right:353.7px;top:473px;">10.550</div>
<div class="a r t11" style="right:254.8px;top:473px;">105.500</div>
<div class="y" style="left:48px;top:487px;width:47px;height:13px;"></div>
<div class="lb" style="left:123px;top:487px;width:103.5px;height:13px;"></div>
<div class="lb" style="left:229px;top:487px;width:54.75px;height:13px;"></div>
<div class="mb" style="left:287px;top:487px;width:226.75px;height:13px;"></div>
<div class="y" style="left:517px;top:487px;width:35px;height:13px;"></div>
<div class="y" style="left:624px;top:487px;width:17px;height:13px;"></div>
<div class="y" style="left:650px;top:487px;width:47px;height:13px;"></div>
<div class="y" style="left:699px;top:487px;width:42px;height:13px;"></div>
<div class="y" style="left:48px;top:502px;width:47px;height:13px;"></div>
<div class="lb" style="left:123px;top:502px;width:103.5px;height:13px;"></div>
<div class="lb" style="left:229px;top:502px;width:54.75px;height:13px;"></div>
<div class="mb" style="left:287px;top:502px;width:226.75px;height:13px;"></div>
<div class="y" style="left:517px;top:502px;width:35px;height:13px;"></div>
<div class="y" style="left:624px;top:502px;width:17px;height:13px;"></div>
<div class="y" style="left:650px;top:502px;width:47px;height:13px;"></div>
<div class="y" style="left:699px;top:502px;width:42px;height:13px;"></div>
<div class="a r t11" style="right:955.2px;top:503px;">8.000</div>
<div class="a t11" style="left:97.5px;top:503px;">SH</div>
<div class="a t11" style="left:123.5px;top:503px;">S CL SHALE GREY</div>
<div class="a t11" style="left:287.3px;top:503px;">ROOFING SHALE GREY - Per Square Metre</div>
<div class="a r t11" style="right:453px;top:503px;">8.000</div>
<div class="a t11" style="left:598.5px;top:503px;">M2</div>
<div class="a r t11" style="right:353.7px;top:503px;">19.100</div>
<div class="a r t11" style="right:254.8px;top:503px;">152.800</div>
<div class="y" style="left:48px;top:517px;width:47px;height:13px;"></div>
<div class="lb" style="left:123px;top:517px;width:103.5px;height:13px;"></div>
<div class="lb" style="left:229px;top:517px;width:54.75px;height:13px;"></div>
<div class="mb" style="left:287px;top:517px;width:226.75px;height:13px;"></div>
<div class="y" style="left:517px;top:517px;width:35px;height:13px;"></div>
<div class="y" style="left:624px;top:517px;width:17px;height:13px;"></div>
<div class="y" style="left:650px;top:517px;width:47px;height:13px;"></div>
<div class="y" style="left:699px;top:517px;width:42px;height:13px;"></div>
<div class="y" style="left:48px;top:532px;width:47px;height:13px;"></div>
<div class="lb" style="left:123px;top:532px;width:103.5px;height:13px;"></div>
<div class="lb" style="left:229px;top:532px;width:54.75px;height:13px;"></div>
<div class="mb" style="left:287px;top:532px;width:226.75px;height:13px;"></div>
<div class="y" style="left:517px;top:532px;width:35px;height:13px;"></div>
<div class="y" style="left:624px;top:532px;width:17px;height:13px;"></div>
<div class="y" style="left:650px;top:532px;width:47px;height:13px;"></div>
<div class="y" style="left:699px;top:532px;width:42px;height:13px;"></div>
<div class="a r t11" style="right:955.2px;top:533px;">10.000</div>
<div class="a t11" style="left:123.5px;top:533px;">S BOLT HX 12100</div>
<div class="a t11" style="left:287.3px;top:533px;">Bolt Hex Head Assembly 12mm x 100mm</div>
<div class="a r t11" style="right:453px;top:533px;">10.000</div>
<div class="a r t11" style="right:353.7px;top:533px;">2.800</div>
<div class="a r t11" style="right:254.8px;top:533px;">28.000</div>
<div class="y" style="left:48px;top:547px;width:47px;height:13px;"></div>
<div class="lb" style="left:123px;top:547px;width:103.5px;height:13px;background:#fff;border-color:#fff"></div>
<div class="lb" style="left:229px;top:547px;width:54.75px;height:13px;"></div>
<div class="mb" style="left:287px;top:547px;width:226.75px;height:13px;"></div>
<div class="y" style="left:517px;top:547px;width:35px;height:13px;"></div>
<div class="y" style="left:624px;top:547px;width:17px;height:13px;"></div>
<div class="y" style="left:650px;top:547px;width:47px;height:13px;"></div>
<div class="y" style="left:699px;top:547px;width:42px;height:13px;"></div>
<div class="a r t11" style="right:955.2px;top:548px;">10.000</div>
<div class="a t11" style="left:123.5px;top:548px;">S BOLT HX 12150</div>
<div class="a t11" style="left:287.3px;top:548px;">Bolt Hex Head Assembly 12mm x 150mm</div>
<div class="a r t11" style="right:453px;top:548px;">10.000</div>
<div class="a r t11" style="right:353.7px;top:548px;">3.600</div>
<div class="a r t11" style="right:254.8px;top:548px;">36.000</div>
<div class="y" style="left:48px;top:562px;width:47px;height:13px;"></div>
<div class="lb" style="left:123px;top:562px;width:103.5px;height:13px;"></div>
<div class="lb" style="left:229px;top:562px;width:54.75px;height:13px;"></div>
<div class="mb" style="left:287px;top:562px;width:226.75px;height:13px;"></div>
<div class="y" style="left:517px;top:562px;width:35px;height:13px;"></div>
<div class="y" style="left:624px;top:562px;width:17px;height:13px;"></div>
<div class="y" style="left:650px;top:562px;width:47px;height:13px;"></div>
<div class="y" style="left:699px;top:562px;width:42px;height:13px;"></div>
<div class="y" style="left:48px;top:576px;width:47px;height:13px;"></div>
<div class="lb" style="left:123px;top:576px;width:103.5px;height:13px;"></div>
<div class="lb" style="left:229px;top:576px;width:54.75px;height:13px;"></div>
<div class="mb" style="left:287px;top:576px;width:226.75px;height:13px;"></div>
<div class="y" style="left:517px;top:576px;width:35px;height:13px;"></div>
<div class="y" style="left:624px;top:576px;width:17px;height:13px;"></div>
<div class="y" style="left:650px;top:576px;width:47px;height:13px;"></div>
<div class="y" style="left:699px;top:576px;width:42px;height:13px;"></div>
<div class="a r t11" style="right:955.2px;top:577px;">12.500</div>
<div class="a t11" style="left:123.5px;top:577px;">L FRAME</div>
<div class="a t11" style="left:287.3px;top:577px;">LABOUR</div>
<div class="a r t11" style="right:453px;top:577px;">12.500</div>
<div class="a r t11" style="right:353.7px;top:577px;color:#8b0000">50.000</div>
<div class="a r t11" style="right:254.8px;top:577px;">625.000</div>
<div class="y" style="left:48px;top:591px;width:47px;height:13px;"></div>
<div class="lb" style="left:123px;top:591px;width:103.5px;height:13px;"></div>
<div class="lb" style="left:229px;top:591px;width:54.75px;height:13px;"></div>
<div class="mb" style="left:287px;top:591px;width:226.75px;height:13px;"></div>
<div class="y" style="left:517px;top:591px;width:35px;height:13px;"></div>
<div class="y" style="left:624px;top:591px;width:17px;height:13px;"></div>
<div class="y" style="left:650px;top:591px;width:47px;height:13px;"></div>
<div class="y" style="left:699px;top:591px;width:42px;height:13px;"></div>
<div class="y" style="left:48px;top:606px;width:47px;height:13px;"></div>
<div class="lb" style="left:123px;top:606px;width:103.5px;height:13px;"></div>
<div class="lb" style="left:229px;top:606px;width:54.75px;height:13px;"></div>
<div class="mb" style="left:287px;top:606px;width:226.75px;height:13px;"></div>
<div class="y" style="left:517px;top:606px;width:35px;height:13px;"></div>
<div class="y" style="left:624px;top:606px;width:17px;height:13px;"></div>
<div class="y" style="left:650px;top:606px;width:47px;height:13px;"></div>
<div class="y" style="left:699px;top:606px;width:42px;height:13px;"></div>
<div class="y" style="left:48px;top:621px;width:47px;height:13px;"></div>
<div class="lb" style="left:123px;top:621px;width:103.5px;height:13px;"></div>
<div class="lb" style="left:229px;top:621px;width:54.75px;height:13px;"></div>
<div class="mb" style="left:287px;top:621px;width:226.75px;height:13px;"></div>
<div class="y" style="left:517px;top:621px;width:35px;height:13px;"></div>
<div class="y" style="left:624px;top:621px;width:17px;height:13px;"></div>
<div class="y" style="left:650px;top:621px;width:47px;height:13px;"></div>
<div class="y" style="left:699px;top:621px;width:42px;height:13px;"></div>
<div class="y" style="left:48px;top:635px;width:47px;height:13px;"></div>
<div class="lb" style="left:123px;top:635px;width:103.5px;height:13px;"></div>
<div class="lb" style="left:229px;top:635px;width:54.75px;height:13px;"></div>
<div class="mb" style="left:287px;top:635px;width:226.75px;height:13px;"></div>
<div class="y" style="left:517px;top:635px;width:35px;height:13px;"></div>
<div class="y" style="left:624px;top:635px;width:17px;height:13px;"></div>
<div class="y" style="left:650px;top:635px;width:47px;height:13px;"></div>
<div class="y" style="left:699px;top:635px;width:42px;height:13px;"></div>
<div class="y" style="left:48px;top:650px;width:47px;height:13px;"></div>
<div class="lb" style="left:123px;top:650px;width:103.5px;height:13px;"></div>
<div class="lb" style="left:229px;top:650px;width:54.75px;height:13px;"></div>
<div class="mb" style="left:287px;top:650px;width:226.75px;height:13px;"></div>
<div class="y" style="left:517px;top:650px;width:35px;height:13px;"></div>
<div class="y" style="left:624px;top:650px;width:17px;height:13px;"></div>
<div class="y" style="left:650px;top:650px;width:47px;height:13px;"></div>
<div class="y" style="left:699px;top:650px;width:42px;height:13px;"></div>
<div class="y" style="left:48px;top:665px;width:47px;height:13px;"></div>
<div class="lb" style="left:123px;top:665px;width:103.5px;height:13px;"></div>
<div class="lb" style="left:229px;top:665px;width:54.75px;height:13px;"></div>
<div class="mb" style="left:287px;top:665px;width:226.75px;height:13px;"></div>
<div class="y" style="left:517px;top:665px;width:35px;height:13px;"></div>
<div class="y" style="left:624px;top:665px;width:17px;height:13px;"></div>
<div class="y" style="left:650px;top:665px;width:47px;height:13px;"></div>
<div class="y" style="left:699px;top:665px;width:42px;height:13px;"></div>
<div class="y" style="left:48px;top:680px;width:47px;height:13px;"></div>
<div class="lb" style="left:123px;top:680px;width:103.5px;height:13px;"></div>
<div class="lb" style="left:229px;top:680px;width:54.75px;height:13px;"></div>
<div class="mb" style="left:287px;top:680px;width:226.75px;height:13px;"></div>
<div class="y" style="left:517px;top:680px;width:35px;height:13px;"></div>
<div class="y" style="left:624px;top:680px;width:17px;height:13px;"></div>
<div class="y" style="left:650px;top:680px;width:47px;height:13px;"></div>
<div class="y" style="left:699px;top:680px;width:42px;height:13px;"></div>
<div class="y" style="left:48px;top:695px;width:47px;height:13px;"></div>
<div class="lb" style="left:123px;top:695px;width:103.5px;height:13px;"></div>
<div class="lb" style="left:229px;top:695px;width:54.75px;height:13px;"></div>
<div class="mb" style="left:287px;top:695px;width:226.75px;height:13px;"></div>
<div class="y" style="left:517px;top:695px;width:35px;height:13px;"></div>
<div class="y" style="left:624px;top:695px;width:17px;height:13px;"></div>
<div class="y" style="left:650px;top:695px;width:47px;height:13px;"></div>
<div class="y" style="left:699px;top:695px;width:42px;height:13px;"></div>
<div class="y" style="left:48px;top:710px;width:47px;height:13px;"></div>
<div class="lb" style="left:123px;top:710px;width:103.5px;height:13px;"></div>
<div class="lb" style="left:229px;top:710px;width:54.75px;height:13px;"></div>
<div class="mb" style="left:287px;top:710px;width:226.75px;height:13px;"></div>
<div class="y" style="left:517px;top:710px;width:35px;height:13px;"></div>
<div class="y" style="left:624px;top:710px;width:17px;height:13px;"></div>
<div class="y" style="left:650px;top:710px;width:47px;height:13px;"></div>
<div class="y" style="left:699px;top:710px;width:42px;height:13px;"></div>
<div class="vl" style="left:94px;top:426px;width:1px;height:298px;"></div>
<div class="vl" style="left:120px;top:426px;width:1px;height:298px;"></div>
<div class="vl" style="left:227px;top:426px;width:1px;height:298px;"></div>
<div class="vl" style="left:284px;top:426px;width:1px;height:298px;"></div>
<div class="vl" style="left:514px;top:426px;width:1px;height:298px;"></div>
<div class="vl" style="left:552px;top:426px;width:1px;height:298px;"></div>
<div class="vl" style="left:596px;top:426px;width:1px;height:298px;"></div>
<div class="vl" style="left:622px;top:426px;width:1px;height:298px;"></div>
<div class="vl" style="left:648px;top:426px;width:1px;height:298px;"></div>
<div class="vl" style="left:697px;top:426px;width:1px;height:298px;"></div>
<div class="vl" style="left:741px;top:426px;width:1px;height:298px;"></div>
<div class="a r t11" style="right:950.3px;top:729px;">60.500</div>
<div class="a " style="left:53.3px;top:746.3px;font-size:14.4px;line-height:18px">Quotes are valid for 60 days</div>
<div class="a r g" style="right:309.5px;top:728.5px;font-size:10.5px;line-height:13px">Subtotal</div>
<div class="a r t11" style="right:255.3px;top:728.5px;">2474.850</div>
<div class="a r g" style="right:309.5px;top:741.8px;font-size:10.5px;line-height:13px">Freight</div>
<div class="a r g" style="right:309.5px;top:754.5px;font-size:10.5px;line-height:13px">GST</div>
<div class="a r t11" style="right:255.3px;top:754.5px;">247.490</div>
<div class="a r g" style="right:309.5px;top:767.5px;font-size:10.5px;line-height:13px">Total</div>
<div class="a r t11" style="right:255.3px;top:767.5px;">2722.340</div>
<div class="y" style="left:742px;top:741.3px;width:58px;height:12.3px;"></div>
<div class="a g" style="left:910.3px;top:791px;font-size:9px;line-height:11px">Page:</div>
<div class="a g" style="left:946.3px;top:791px;font-size:9px;line-height:11px">1</div>
<div class="a g" style="left:963px;top:791px;font-size:9px;line-height:11px">of</div>
<div class="a g" style="left:985.3px;top:791px;font-size:9px;line-height:11px">1</div>
<div class="a" style="left:184px;top:608px;width:496px;height:170px;background:#fff;border-top:1px solid #4c4c4c;box-shadow:0 5px 15px rgba(0,0,0,0.3)"></div>
<div class="a " style="left:192px;top:616px;font-size:12px;line-height:16px;letter-spacing:-0.4px">Product: S BOLT HX 12150</div>
<div class="a vd" style="left:188px;top:644px;font-size:11px;letter-spacing:0.3px;line-height:14px">Bolt Hex Head Assembly 12mm x 150mm</div>
<div class="a" style="left:660px;top:616px;width:18.8px;height:18.8px;background:#c9504f;color:#fff;font-weight:bold;font-family:DejaVu Sans,sans-serif;font-size:10px;line-height:18px;text-align:center">x</div>
<div class="a" style="left:664px;top:639px;width:14.8px;height:138px;background:#f1f1f1"></div>
<div class="a" style="left:664px;top:656px;width:14.8px;height:16.7px;background:#c8c8c8"></div>
<svg class="a" style="left:664px;top:640px" width="16" height="16" viewBox="0 0 16 16"><path d="M4.2 10.3L7.5 6.8L10.8 10.3" stroke="#505050" stroke-width="2" fill="none"/></svg>
<svg class="a" style="left:664px;top:761px" width="16" height="16" viewBox="0 0 16 16"><path d="M4.2 6.5L7.5 10L10.8 6.5" stroke="#505050" stroke-width="2" fill="none"/></svg>
<div class="a r vd" style="right:499.5px;top:642px;font-size:11px;letter-spacing:0.3px;line-height:14px;color:#555">Stock:</div>
<div class="a r vd" style="right:499.5px;top:653.7px;font-size:11px;letter-spacing:0.3px;line-height:14px;color:#555">Customer Orders:</div>
<div class="a r vd" style="right:499.5px;top:665.7px;font-size:11px;letter-spacing:0.3px;line-height:14px;color:#555">Supplier Orders:</div>
<div class="a r vd" style="right:499.5px;top:677.7px;font-size:11px;letter-spacing:0.3px;line-height:14px;color:#555">Available For Sale:</div>
<div class="a r vd" style="right:499.5px;top:702.7px;font-size:11px;letter-spacing:0.3px;line-height:14px;color:#555">Group:</div>
<div class="a vd" style="left:561.5px;top:642px;font-size:11px;letter-spacing:0.3px;line-height:14px">10.000</div>
<div class="a vd" style="left:561.5px;top:677.7px;font-size:11px;letter-spacing:0.3px;line-height:14px">10.000</div>
<div class="a " style="left:556px;top:702px;font-size:11px;line-height:14px">FASTENERS</div>
<div class="a vd" style="left:381px;top:727px;font-size:11px;letter-spacing:0.3px;line-height:14px;color:#0000ee;text-decoration:underline">Go To Stock Account</div>
<div class="a vd" style="left:392px;top:746px;font-size:11px;letter-spacing:0.3px;line-height:14px;color:#0000ee;text-decoration:underline">Insert Image jpg</div>
<svg class="a" style="left:192px;top:675px" width="137" height="22" viewBox="192 675 137 22">
<defs><linearGradient id="bg1" x1="0" y1="0" x2="0" y2="1"><stop offset="0" stop-color="#dfe4e7"/><stop offset="0.35" stop-color="#cdd3d7"/><stop offset="1" stop-color="#adb3b7"/></linearGradient>
<linearGradient id="bg2" x1="0" y1="0" x2="0" y2="1"><stop offset="0" stop-color="#d0d4d6"/><stop offset="0.4" stop-color="#b9bdbf"/><stop offset="1" stop-color="#9fa3a5"/></linearGradient>
<linearGradient id="bg3" x1="0" y1="0" x2="0" y2="1"><stop offset="0" stop-color="#d6dbde"/><stop offset="0.5" stop-color="#c0c6ca"/><stop offset="1" stop-color="#a9afb3"/></linearGradient>
<pattern id="thr" width="2.2" height="10" patternUnits="userSpaceOnUse" x="260"><rect width="1" height="10" fill="#8f9496" opacity="0.35"/></pattern></defs>
<rect x="200" y="681.2" width="61" height="9.7" fill="url(#bg1)"/>
<rect x="260.5" y="681.4" width="50" height="9.4" fill="url(#bg2)"/>
<rect x="260.5" y="681.4" width="50" height="9.4" fill="url(#thr)"/>
<path d="M194 680.5L195.5 678H199L200.4 680.5V692L199 694.5H195.5L194 692Z" fill="url(#bg3)"/>
<path d="M194 686H200.4" stroke="#b1b7bb" stroke-width="0.6"/>
<path d="M309.5 680L311.5 677.7H317.2L319.2 680V692.6L317.2 694.9H311.5L309.5 692.6Z" fill="url(#bg2)"/>
<path d="M309.5 683.5H319.2M309.5 689.5H319.2" stroke="#a4a8aa" stroke-width="0.6"/>
<rect x="319.2" y="681.8" width="6.3" height="8.4" rx="0.8" fill="#b4b8ba"/>
<rect x="319.2" y="681.8" width="6.3" height="8.4" fill="url(#thr)"/>
</svg>
<div class="a" style="left:1028px;top:109px;width:16.5px;height:695px;background:#f0f0f0"></div>
<div class="a" style="left:1028px;top:126px;width:15px;height:156px;background:#cdcdcd"></div>
<svg class="a" style="left:1028px;top:109px" width="17" height="17" viewBox="0 0 17 17"><path d="M4.3 11L7.6 7.3L10.9 11" stroke="#505050" stroke-width="2.1" fill="none"/></svg>
<svg class="a" style="left:1028px;top:787px" width="17" height="17" viewBox="0 0 17 17"><path d="M4.3 6.3L7.6 10L10.9 6.3" stroke="#505050" stroke-width="2.1" fill="none"/></svg>
<div class="a" style="left:3px;top:804px;width:1042px;height:17px;background:#f0f0f0"></div>
<div class="a" style="left:20px;top:804px;width:975px;height:15px;background:#cdcdcd"></div>
<svg class="a" style="left:3px;top:803px" width="17" height="17" viewBox="0 0 17 17"><path d="M10.8 5.2L7.2 8.5L10.8 11.8" stroke="#505050" stroke-width="2.1" fill="none"/></svg>
<svg class="a" style="left:1011px;top:803px" width="17" height="17" viewBox="0 0 17 17"><path d="M6.2 5.2L9.8 8.5L6.2 11.8" stroke="#505050" stroke-width="2.1" fill="none"/></svg>
<div class="a" style="left:1px;top:821px;width:1045px;height:23px;background:linear-gradient(#ffffff 0%,#f4f9fe 4%,#d8e8fb 6%,#d0e3f9 15%,#b7d4f5 18%,#b9d3f5 38%,#c4d6f4 43%,#c3d7f4 58%,#bfd8f5 63%,#c3dbf6 78%,#cfe2f8 84%,#d6e6f9 100%)"></div>
<div class="a" style="left:1px;top:820px;width:1045px;height:1px;background:#fafcff"></div>
<div class="a ui" style="left:3px;top:824px;line-height:16px;letter-spacing:-0.74px;color:#15156a">Ready</div>
<div class="a" style="left:401px;top:823px;width:1px;height:20px;background:#9fb6dc"></div>
<div class="a" style="left:402px;top:823px;width:1px;height:20px;background:#eef4fd"></div>
<div class="a" style="left:483px;top:823px;width:1px;height:20px;background:#9fb6dc"></div>
<div class="a" style="left:484px;top:823px;width:1px;height:20px;background:#eef4fd"></div>
<div class="a" style="left:615px;top:823px;width:1px;height:20px;background:#9fb6dc"></div>
<div class="a" style="left:616px;top:823px;width:1px;height:20px;background:#eef4fd"></div>
<div class="a" style="left:917px;top:823px;width:1px;height:20px;background:#9fb6dc"></div>
<div class="a" style="left:918px;top:823px;width:1px;height:20px;background:#eef4fd"></div>
<div class="a" style="left:405px;top:827px;width:1px;height:9px;background:#d4dfae"></div>
<div class="a" style="left:474px;top:827px;width:1px;height:9px;background:#86cdf2"></div>
<div class="a" style="left:487px;top:827px;width:1px;height:9px;background:#d4dfae"></div>
<svg class="a" style="left:1033px;top:831px" width="13" height="13" viewBox="0 0 13 13"><g fill="#2a3f74"><rect x="9" y="9" width="2" height="2"/><rect x="5" y="9" width="2" height="2"/><rect x="1" y="9" width="2" height="2"/><rect x="9" y="5" width="2" height="2"/><rect x="5" y="5" width="2" height="2"/><rect x="9" y="1" width="2" height="2"/></g></svg>
<div class="a" style="left:0;top:844px;width:1047px;height:1px;background:#a2a2a2"></div>
<div class="a" style="left:1046px;top:0;width:1px;height:845px;background:#a2a2a2"></div>
<div class="a" style="left:1044.5px;top:109px;width:1.5px;height:712px;background:#fbfbfb"></div>
</body></html>
